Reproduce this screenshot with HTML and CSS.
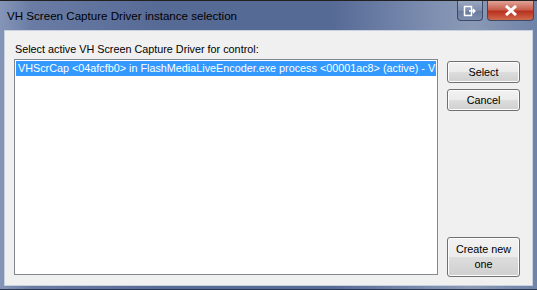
FILE: index.html
```html
<!DOCTYPE html>
<html>
<head>
<title>VH Screen Capture Driver instance selection</title>
<link rel="stylesheet" href="styles.css">
</head>
<body>
<div class="window">
  <div class="titlebar">
    <span class="title">VH Screen Capture Driver instance selection</span>
    <div class="caption-buttons">
      <span class="cap-btn cap-restore">
        <svg width="14" height="12" viewBox="0 0 14 12">
          <rect x="1.5" y="1.5" width="7" height="9" fill="none" stroke="#fff" stroke-width="1.5"/>
          <path d="M6 6h6M10 4l2 2-2 2" fill="none" stroke="#fff" stroke-width="1.3"/>
        </svg>
      </span>
      <span class="cap-btn cap-close">
        <svg width="14" height="11" viewBox="0 0 14 11">
          <path d="M2 1l10 9M12 1L2 10" stroke="#fff" stroke-width="3"/>
        </svg>
      </span>
    </div>
  </div>
  <div class="client">
    <div class="prompt">Select active VH Screen Capture Driver for control:</div>
    <div class="body-row">
      <div class="listbox">
        <div class="item selected">VHScrCap &lt;04afcfb0&gt; in FlashMediaLiveEncoder.exe process &lt;00001ac8&gt; (active) - VHScrCap</div>
      </div>
      <div class="buttons">
        <button class="btn">Select</button>
        <button class="btn">Cancel</button>
        <button class="btn btn-tall">Create new<br>one</button>
      </div>
    </div>
  </div>
</div>
</body>
</html>
```

FILE: styles.css
```css
/* Windows 7 style dialog */

body
{ margin: 0;
  font-family: "Liberation Sans", "DejaVu Sans", sans-serif;
  font-size: 10.8px;
}

.window
{ width: 537px;
  height: 290px;
  box-sizing: border-box;
  border-top: 1px solid #222;
  border-bottom: 1px solid #2a3550;
  background: linear-gradient(90deg, #8595b8 0%, #6a7ca4 6%, #566a96 30%, #566a96 62%, #7d8eb0 80%, #8a9ab6 88%, #6f82a8 100%);
  display: flex;
  flex-direction: column;
}

.titlebar
{ height: 29px;
  display: flex;
  align-items: flex-start;
  justify-content: space-between;
}

.title
{ padding: 8px 0 0 7px;
  color: #000;
  font-size: 11.6px;
}

.caption-buttons
{ display: flex;
  gap: 4px;
  margin-right: 3px;
}

.cap-btn
{ height: 20px;
  display: flex;
  align-items: center;
  justify-content: center;
  border: 1px solid #3d4a66;
  border-top: none;
  border-radius: 0 0 4px 4px;
  box-sizing: border-box;
}

.cap-restore
{ width: 26px;
  background: linear-gradient(#9aa7c0, #7e8dab 50%, #6a7a9c 51%, #7c8cae);
}

.cap-close
{ width: 47px;
  background: linear-gradient(#e0a397, #c9604f 45%, #b8321f 55%, #d06a4e);
}

.client
{ flex: 1;
  margin: 0 4px 3px 4px;
  background: #f0f0f0;
  border: 1px solid #c9d0de;
  padding: 10px 12px 10px 9px;
  display: flex;
  flex-direction: column;
}

.prompt
{ color: #000;
  line-height: 16px;
  margin-bottom: 2px;
  padding-left: 1px;
}

.body-row
{ flex: 1;
  display: flex;
  gap: 9px;
}

.listbox
{ flex: 1;
  background: #fff;
  border: 1px solid #828790;
  padding: 1px;
  overflow: hidden;
}

.item
{ white-space: nowrap;
  line-height: 15px;
  padding-left: 2px;
  overflow: hidden;
}

.item.selected
{ background: #3399ff;
  color: #fff;
}

.buttons
{ width: 73px;
  display: flex;
  flex-direction: column;
  gap: 6px;
  padding-top: 2px;
}

.btn
{ height: 22px;
  font: inherit;
  color: #000;
  border: 1px solid #707070;
  border-radius: 3px;
  background: linear-gradient(#f2f2f2, #ebebeb 50%, #dddddd 51%, #cfcfcf);
  box-shadow: inset 0 0 0 1px #fcfcfc;
  padding: 0;
}

.btn-tall
{ height: 40px;
  margin-top: auto;
  margin-bottom: -2px;
  line-height: 15px;
}
```
